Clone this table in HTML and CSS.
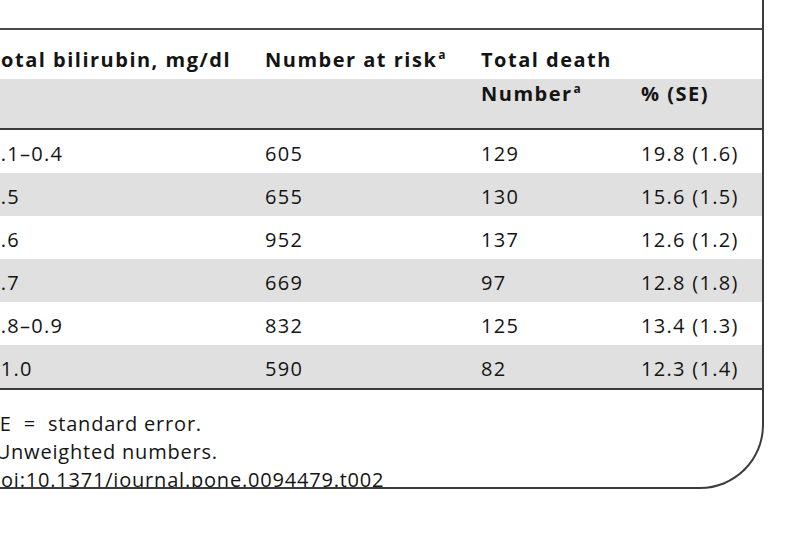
FILE: index.html
```html
<!DOCTYPE html>
<html>
<head>
<meta charset="utf-8">
<link rel="stylesheet" href="styles.css">
</head>
<body>
<div class="box">
  <div class="caption"></div>
  <table class="data">
    <thead>
      <tr class="h1">
        <th>Total bilirubin, mg/dl</th>
        <th>Number at risk<sup>a</sup></th>
        <th>Total death</th>
        <th></th>
      </tr>
      <tr class="h2 shade">
        <th></th>
        <th></th>
        <th>Number<sup>a</sup></th>
        <th>% (SE)</th>
      </tr>
    </thead>
    <tbody>
      <tr><td>0.1–0.4</td><td>605</td><td>129</td><td>19.8 (1.6)</td></tr>
      <tr class="shade"><td>0.5</td><td>655</td><td>130</td><td>15.6 (1.5)</td></tr>
      <tr><td>0.6</td><td>952</td><td>137</td><td>12.6 (1.2)</td></tr>
      <tr class="shade"><td>0.7</td><td>669</td><td>97</td><td>12.8 (1.8)</td></tr>
      <tr><td>0.8–0.9</td><td>832</td><td>125</td><td>13.4 (1.3)</td></tr>
      <tr class="shade"><td>≥1.0</td><td>590</td><td>82</td><td>12.3 (1.4)</td></tr>
    </tbody>
  </table>
  <div class="notes">
    <p>SE&nbsp; = &nbsp;standard error.</p>
    <p><sup>a</sup>Unweighted numbers.</p>
    <p>doi:10.1371/journal.pone.0094479.t002</p>
  </div>
</div>
</body>
</html>
```

FILE: styles.css
```css
html, body {
  margin: 0;
  padding: 0;
  background: #ffffff;
  overflow: hidden;
}

body {
  font-family: "Open Sans", "Noto Sans", sans-serif;
  color: #141414;
}

.box {
  margin-left: -20px;
  width: 782px;
  height: 487px;
  border-right: 2px solid #3c3c3c;
  border-bottom: 2px solid #3c3c3c;
  border-bottom-right-radius: 64px;
  overflow: hidden;
}

.caption {
  height: 28px;
  border-bottom: 2px solid #4a4a4a;
}

.data {
  width: 100%;
  border-collapse: collapse;
  table-layout: fixed;
  font-size: 20px;
  letter-spacing: 1.3px;
}

.data th,
.data td {
  padding: 0;
  text-align: left;
  white-space: nowrap;
}

.data th {
  font-weight: bold;
  letter-spacing: 1.5px;
}

.data th:first-child,
.data td:first-child {
  width: 285px;
  padding-left: 8px;
  box-sizing: border-box;
}

.data th:nth-child(2),
.data td:nth-child(2) {
  width: 216px;
}

.data th:nth-child(3),
.data td:nth-child(3) {
  width: 160px;
}

.h1 th {
  height: 39px;
  padding-top: 10px;
  vertical-align: middle;
}

.h2 th {
  height: 29px;
  padding-bottom: 20px;
  vertical-align: middle;
}

.data thead tr.h2 {
  border-bottom: 2px solid #3a3a3a;
}

.data tbody td {
  height: 39px;
  padding-top: 4px;
  vertical-align: middle;
}

.data tbody tr:last-child {
  border-bottom: 2px solid #3a3a3a;
}

.shade {
  background: #e0e0e0;
}

sup {
  font-size: 12px;
  vertical-align: 8px;
  line-height: 0;
  letter-spacing: 0;
  margin-left: 1px;
}

.notes {
  padding: 20px 0 0 8px;
  font-size: 20px;
  line-height: 28px;
  letter-spacing: 0.8px;
}

.notes p {
  margin: 0;
}

.notes sup {
  margin-left: 0;
  margin-right: 1px;
}
```
